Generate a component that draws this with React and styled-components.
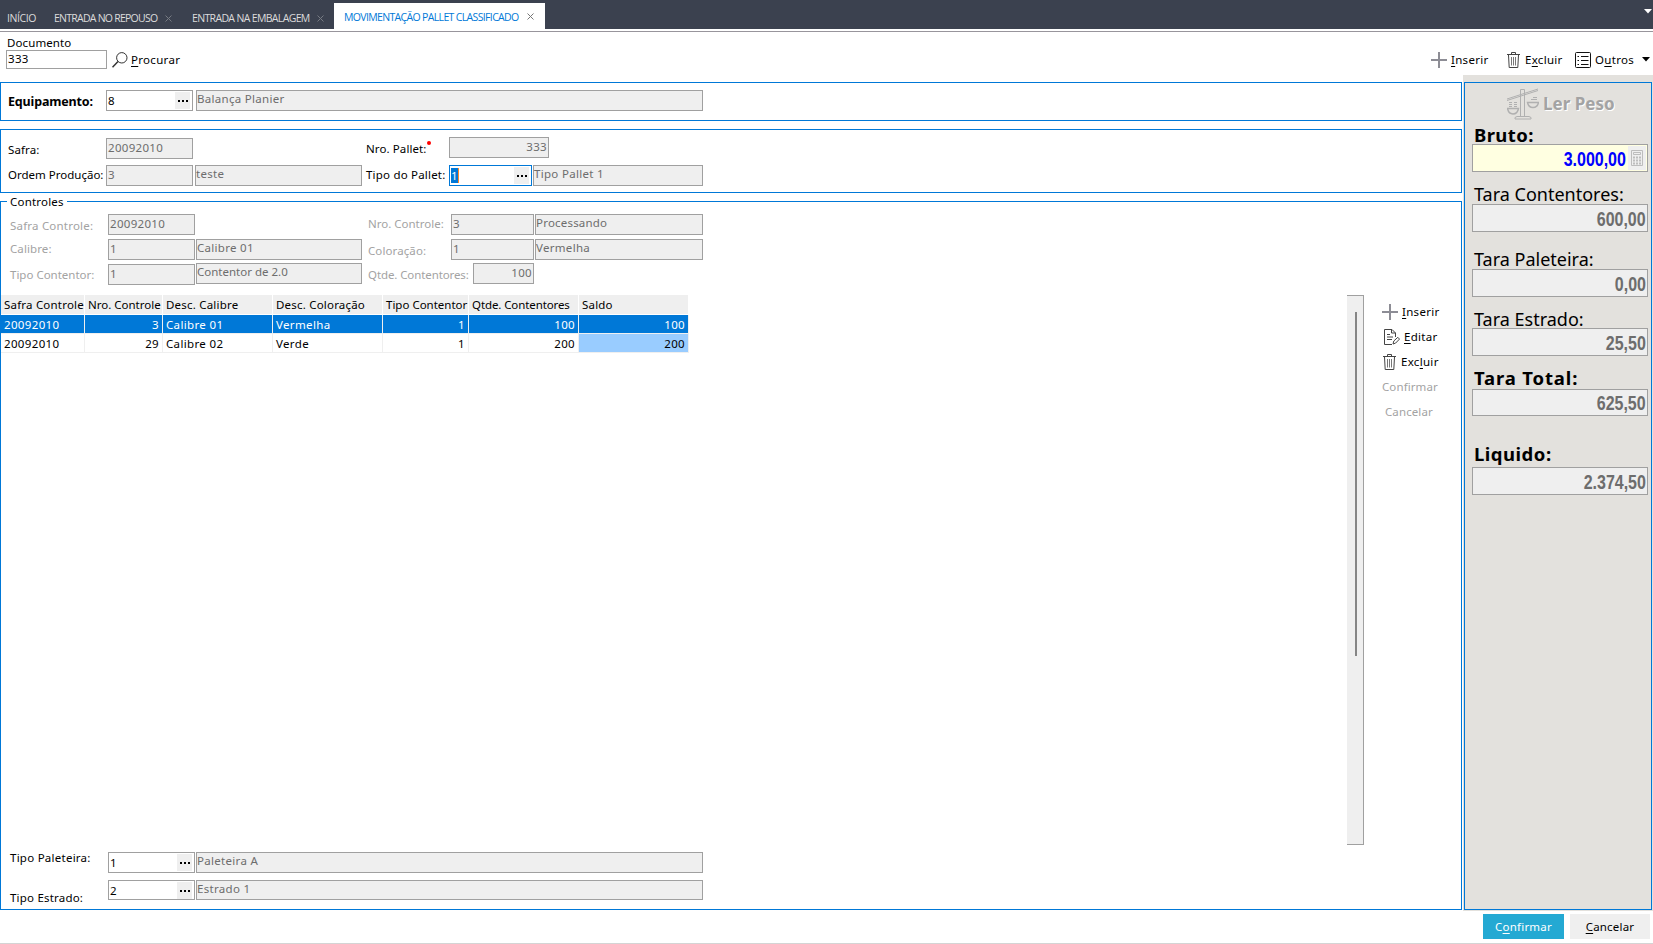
import React from 'react'
import styled, { createGlobalStyle, css } from 'styled-components'

const colors = {
  blue: '#0078d7',
  bar: '#3b414f',
  field: '#efefef',
  fieldBorder: '#a0a0a0',
  fieldText: '#6d6d6d',
  muted: '#a3a3a3',
  side: '#e3e1dd',
}

const GlobalStyle = createGlobalStyle`
  * {
    box-sizing: border-box;
  }

  body {
    margin: 0;
    background: #fff;
    color: #000;
    font-family: 'Noto Sans', 'Open Sans', sans-serif;
    font-size: 11.5px;
    line-height: 16px;
    letter-spacing: 0.1px;
    white-space: nowrap;
    overflow: hidden;
  }

  u {
    text-decoration-thickness: 1px;
    text-underline-offset: 2px;
  }
`

const Page = styled.div`
  display: flex;
  flex-direction: column;
  width: 1653px;
  height: 944px;
  border-bottom: 1px solid #d4d4d4;
`

const TabBar = styled.nav`
  display: flex;
  align-items: flex-end;
  height: 29px;
  background: ${colors.bar};
`

const Tab = styled.div`
  display: flex;
  align-items: center;
  justify-content: space-between;
  width: ${({ $w }) => $w}px;
  height: 26px;
  margin-left: ${({ $left }) => $left || 0}px;
  padding: ${({ $active }) => ($active ? '1px 11px 0 10px' : '4px 10px 0 7px')};
  background: ${({ $active }) => ($active ? '#fff' : 'transparent')};
  color: ${({ $active }) => ($active ? colors.blue : '#dcdcdc')};
  font-family: 'Open Sans', sans-serif;
  font-size: 10.5px;
  letter-spacing: ${({ $track }) => $track || -0.4}px;

  svg {
    flex: none;
    color: ${({ $active }) => ($active ? '#777' : '#777b83')};
  }
`

const TabMenu = styled.div`
  display: flex;
  flex: 1;
  justify-content: flex-end;
  height: 26px;
  padding: 6px 1px 0 0;
  color: #fff;
`

const TabRule = styled.div`
  height: 3px;
  border-bottom: 1px solid #98959c;
`

const Toolbar = styled.header`
  display: flex;
  justify-content: space-between;
  height: 43px;
  padding: 3px 3px 0 6px;
`

const Search = styled.div`
  display: flex;
  align-items: flex-end;
  height: 34px;
`

const SearchField = styled.label`
  display: block;
  width: 101px;
  margin-right: 5px;
  text-indent: 1px;
`

const Caption = styled.span`
  display: block;
  line-height: 14px;
`

const Action = styled.div`
  display: flex;
  align-items: center;
  gap: ${({ $gap }) => $gap || 4}px;
  width: ${({ $w }) => ($w ? `${$w}px` : 'auto')};
  height: ${({ $h }) => $h || 25}px;
  padding-left: ${({ $left }) => $left || 0}px;
  color: ${({ $disabled }) => ($disabled ? colors.muted : '#000')};
  font-size: 11.5px;
  letter-spacing: ${({ $disabled }) => ($disabled ? 0.1 : 0.3)}px;
`

const Actions = styled.div`
  display: flex;
  padding-top: 12px;
`

const Body = styled.main`
  display: flex;
  height: 836px;
`

const Left = styled.div`
  width: 1463px;
  padding-top: 7px;
`

const Panel = styled.section`
  position: relative;
  width: 1462px;
  height: ${({ $h }) => $h}px;
  margin-bottom: 8px;
  border: 1px solid ${colors.blue};
`

const Legend = styled.div`
  position: absolute;
  top: -8px;
  left: 6px;
  padding: 0 3px;
  background: #fff;
  letter-spacing: 0.2px;
`

const Row = styled.div`
  display: flex;
  align-items: flex-start;
  height: ${({ $h }) => $h}px;
  padding-left: ${({ $left }) => $left || 7}px;
`

const Label = styled.div`
  flex: none;
  width: ${({ $w }) => $w}px;
  padding-top: ${({ $top }) => $top || 2}px;
  color: ${({ $muted }) => ($muted ? colors.muted : '#000')};
  letter-spacing: ${({ $track = 0.1 }) => $track}px;
  ${({ $bold }) =>
    $bold &&
    css`
      font-size: 12.5px;
      font-weight: 700;
    `}
`

const Required = styled.span`
  position: absolute;
  width: 4px;
  height: 4px;
  border-radius: 2px;
  background: #f00;
`

const Field = styled.div`
  display: flex;
  flex: none;
  justify-content: ${({ $right }) => ($right ? 'flex-end' : 'flex-start')};
  width: ${({ $w }) => $w}px;
  height: ${({ $h }) => $h || 21}px;
  margin-top: ${({ $top }) => $top || 0}px;
  margin-right: ${({ $gap }) => $gap || 0}px;
  padding: ${({ $pad }) => $pad || '1px 1px'};
  border: 1px solid ${({ $focus }) => ($focus ? colors.blue : colors.fieldBorder)};
  background: ${({ $edit }) => ($edit ? '#fff' : colors.field)};
  color: ${({ $edit }) => ($edit ? '#000' : colors.fieldText)};
  letter-spacing: ${({ $track = 0.3 }) => $track}px;
`

const LookupValue = styled.span`
  flex: 1;
  padding-top: 1px;
`

const Selected = styled.span`
  display: inline-block;
  height: 15px;
  border-right: 1px solid #ff8728;
  background: ${colors.blue};
  color: #fff;
  line-height: 15px;
`

const Dots = styled.span`
  display: flex;
  align-items: center;
  justify-content: center;
  gap: 2px;
  width: 15px;
  height: 17px;
  background: ${colors.field};

  i {
    width: 2px;
    height: 2px;
    background: #000;
  }
`

const Workspace = styled.div`
  display: flex;
  height: 550px;
`

const TableArea = styled.div`
  width: 1346px;
`

const Table = styled.div`
  display: grid;
  grid-template-columns: 84px 78px 110px 110px 86px 110px 110px;
  width: 688px;
`

const Cell = styled.div`
  height: 19px;
  padding: 2px 3px 0;
  border-right: 1px solid ${colors.field};
  border-bottom: 1px solid ${colors.field};
  background: ${({ $selected, $mark }) => (($selected && colors.blue) || ($mark && '#99ccff') || '#fff')};
  color: ${({ $selected }) => ($selected ? '#fff' : '#000')};
  letter-spacing: 0.35px;
  text-align: ${({ $right }) => ($right ? 'right' : 'left')};
`

const HeadCell = styled(Cell)`
  height: 20px;
  padding-right: 0;
  border-color: #fff;
  background: ${colors.field};
  letter-spacing: ${({ $track = 0.1 }) => $track}px;
`

const Scrollbar = styled.div`
  width: 17px;
  height: 550px;
  padding: 16px 0 0 8px;
  border: 1px solid ${colors.fieldBorder};
  border-left: 0;
  background: ${colors.field};
`

const Thumb = styled.div`
  width: 2px;
  height: 344px;
  background: #858585;
`

const RowActions = styled.div`
  padding: 4px 0 0 18px;
`

const Side = styled.aside`
  width: 190px;
  padding: 7px 1px 0;
  background: ${colors.side};
`

const SidePanel = styled.div`
  width: 188px;
  height: 828px;
  padding: 4px 3px 0 7px;
  border: 1px solid ${colors.blue};
`

const ReadWeight = styled.div`
  display: flex;
  align-items: center;
  gap: 4px;
  height: 33px;
  padding-left: 35px;
  color: #a3a3a3;
  font-size: 17px;
  font-weight: 700;
  letter-spacing: 0;
  text-shadow: 1px 1px 0 #fff;
`

const WeightLabel = styled.div`
  height: ${({ $h }) => $h}px;
  padding-top: ${({ $top }) => $top}px;
  padding-left: 2px;
  font-size: ${({ $bold }) => ($bold ? 18.5 : 18)}px;
  font-weight: ${({ $bold }) => ($bold ? 700 : 400)};
  line-height: 24px;
  letter-spacing: ${({ $track }) => $track || 0}px;
`

const WeightValue = styled.div`
  display: flex;
  align-items: center;
  justify-content: flex-end;
  width: 176px;
  height: ${({ $h }) => $h || 28}px;
  padding: 1px 1px 0;
  border: 1px solid ${colors.fieldBorder};
  background: ${({ $live }) => ($live ? '#ffffe1' : colors.field)};
  color: ${({ $live }) => ($live ? '#0000ff' : colors.fieldText)};
`

const Digits = styled.span`
  font-family: 'Liberation Sans', Arial, sans-serif;
  font-size: 19.5px;
  font-weight: 700;
  letter-spacing: 0;
  transform: scaleX(0.82);
  transform-origin: right center;
`

const Calculator = styled.span`
  display: flex;
  align-items: center;
  justify-content: center;
  width: 18px;
  height: 24px;
  margin: -1px 0 0 2px;
  background: ${colors.field};
`

const Footer = styled.footer`
  display: flex;
  justify-content: flex-end;
  gap: 6px;
  padding: 3px 3px 0 0;
`

const Button = styled.button`
  width: ${({ $primary }) => ($primary ? 81 : 80)}px;
  height: 25px;
  padding: 0;
  border: 0;
  background: ${({ $primary }) => ($primary ? '#24a9d3' : colors.field)};
  color: ${({ $primary }) => ($primary ? '#fff' : '#000')};
  font: inherit;
  letter-spacing: 0.2px;
`

const CloseIcon = () => (
  <svg width="7" height="7" viewBox="0 0 7 7" fill="none" stroke="currentColor">
    <path d="M.5.5l6 6M6.5.5l-6 6" />
  </svg>
)

const SearchIcon = () => (
  <svg width="16" height="16" viewBox="0 0 16 16" fill="none" stroke="#333">
    <circle cx="9.8" cy="5.8" r="5.2" />
    <path d="M6 9.5L.5 15.2" strokeWidth="1.5" />
  </svg>
)

const PlusIcon = () => (
  <svg width="16" height="16" viewBox="0 0 16 16" stroke="#8d8d95" strokeWidth="2">
    <path d="M8 0v16M0 8h16" />
  </svg>
)

const TrashIcon = () => (
  <svg width="13" height="16" viewBox="0 0 13 16" fill="none" stroke="#444">
    <path d="M0 2.5h13M4.5 2V.5h4V2M1.5 3l.7 12.5h8.6L11.5 3" />
    <path d="M4.5 5v8.5M6.5 5v8.5M8.5 5v8.5" stroke="#777" />
  </svg>
)

const ListIcon = () => (
  <svg width="16" height="16" viewBox="0 0 16 16" fill="none" stroke="#111">
    <rect x=".5" y=".5" width="15" height="15" rx="1" />
    <path d="M2.5 4.5H4M2.5 8.5H4M2.5 12.5H4M6 4.5h7.5M6 8.5h7.5M6 12.5h7.5" />
  </svg>
)

const EditIcon = () => (
  <svg width="16" height="16" viewBox="0 0 16 16" fill="none" stroke="#444">
    <path d="M8 15.5H.5V.5H8L11.5 4v4M7.5.5V4h4M3 5.5h3M3 8h6M3 10.5h5" />
    <path d="M9 15l.8-3 4-3.7 1.7 1.8-3.9 4z" />
  </svg>
)

const Caret = () => (
  <svg width="8" height="5" viewBox="0 0 8 5" fill="currentColor">
    <path d="M0 0h8L4 4.5z" />
  </svg>
)

const ScaleIcon = () => (
  <svg width="32" height="32" viewBox="0 0 32 32" fill="none" stroke="#b0b0b0">
    <path d="M0 11L31 1M0 12.5L31 2.5" />
    <path d="M13.5 28V1.5h4V28M8 31v-1.5l2-1h12l2 1V31z" />
    <path d="M.5 20.5h11q-1 5.5-5.5 5.5T.5 20.5zM20.5 14.5h11q-1 5-5.5 5t-5.5-5z" strokeWidth="1.4" />
    <path d="M2 14.5h3M7 14.5h3M2 16.5h3M7 16.5h3M2 18.5h3M7 18.5h3M26 9.5h4M24 11.5h6" />
  </svg>
)

const CalculatorIcon = () => (
  <svg width="12" height="16" viewBox="0 0 12 16" fill="none" stroke="#bdbdbd">
    <path d="M.5.5h11v15H.5zM2.5 2.5h7v2h-7z" />
    <path d="M2 7.5h8M2 10.5h8M2 13.5h8" strokeWidth="2" strokeDasharray="2 1" />
  </svg>
)

const Lookup = ({ value, focus, ...props }) => (
  <Field $edit $focus={focus} $pad="1px 2px 1px 1px" {...props}>
    <LookupValue>{focus ? <Selected>{value}</Selected> : value}</LookupValue>
    <Dots>
      <i />
      <i />
      <i />
    </Dots>
  </Field>
)

const Weight = ({ children, ...props }) => (
  <WeightValue {...props}>
    <Digits>{children}</Digits>
    {props.$live && <Calculator><CalculatorIcon /></Calculator>}
  </WeightValue>
)

const headers = [
  { title: 'Safra Controle', track: 0.2 },
  { title: 'Nro. Controle', track: 0 },
  { title: 'Desc. Calibre', track: 0.2 },
  { title: 'Desc. Coloração', track: 0.2 },
  { title: 'Tipo Contentor', track: 0 },
  { title: 'Qtde. Contentores', track: -0.1 },
  { title: 'Saldo', track: 0.2 },
]
const rows = [
  ['20092010', '3', 'Calibre 01', 'Vermelha', '1', '100', '100'],
  ['20092010', '29', 'Calibre 02', 'Verde', '1', '200', '200'],
]
const numeric = [1, 4, 5, 6]

const App = () => (
  <Page>
    <GlobalStyle />
    <TabBar>
      <Tab $w={47}>INÍCIO</Tab>
      <Tab $w={135} $track={-0.75}>ENTRADA NO REPOUSO <CloseIcon /></Tab>
      <Tab $w={149} $left={3} $track={-0.65}>ENTRADA NA EMBALAGEM <CloseIcon /></Tab>
      <Tab $w={211} $active $track={-0.65}>MOVIMENTAÇÃO PALLET CLASSIFICADO <CloseIcon /></Tab>
      <TabMenu><Caret /></TabMenu>
    </TabBar>
    <TabRule />
    <Toolbar>
      <Search>
        <SearchField>
          <Caption>Documento</Caption>
          <Field $w={101} $h={19} $edit $pad="0">333</Field>
        </SearchField>
        <Action $h={19} $gap={3}><SearchIcon /><span><u>P</u>rocurar</span></Action>
      </Search>
      <Actions>
        <Action $w={76} $gap={4}><PlusIcon /><span><u>I</u>nserir</span></Action>
        <Action $w={68} $gap={5}><TrashIcon /><span>E<u>x</u>cluir</span></Action>
        <Action $w={67}><ListIcon /><span>O<u>u</u>tros</span></Action>
        <Action><Caret /></Action>
      </Actions>
    </Toolbar>
    <Body>
      <Left>
        <Panel $h={39}>
          <Row $h={37}>
            <Label $w={98} $top={11} $track={-0.15} $bold>Equipamento:</Label>
            <Lookup $w={87} $top={7} $gap={3} value="8" />
            <Field $w={507} $top={7} $pad="0">Balança Planier</Field>
          </Row>
        </Panel>
        <Panel $h={64}>
          <Row $h={35}>
            <Label $w={98} $top={12}>Safra:</Label>
            <Field $w={87} $top={8} $gap={173}>20092010</Field>
            <Label $w={83} $top={11}>Nro. Pallet:<Required /></Label>
            <Field $w={100} $top={7} $right>333</Field>
          </Row>
          <Row $h={27}>
            <Label $w={98} $track={0}>Ordem Produção:</Label>
            <Field $w={87} $gap={2}>3</Field>
            <Field $w={167} $gap={4} $pad="0">teste</Field>
            <Label $w={83} $track={0.2}>Tipo do Pallet:</Label>
            <Lookup $w={83} $gap={1} focus value="1" />
            <Field $w={170} $pad="0">Tipo Pallet 1</Field>
          </Row>
        </Panel>
        <Panel $h={709}>
          <Legend>Controles</Legend>
          <Row $h={37} $left={9}>
            <Label $w={98} $top={16} $track={0.2} $muted>Safra Controle:</Label>
            <Field $w={87} $top={12} $gap={173}>20092010</Field>
            <Label $w={83} $top={14} $track={0} $muted>Nro. Controle:</Label>
            <Field $w={83} $top={12} $gap={1}>3</Field>
            <Field $w={168} $top={12} $pad="0" $track={0.2}>Processando</Field>
          </Row>
          <Row $h={24} $left={9}>
            <Label $w={98} $muted>Calibre:</Label>
            <Field $w={87} $gap={1}>1</Field>
            <Field $w={166} $gap={6} $pad="0">Calibre 01</Field>
            <Label $w={83} $top={4} $muted>Coloração:</Label>
            <Field $w={83} $gap={1}>1</Field>
            <Field $w={168} $pad="0">Vermelha</Field>
          </Row>
          <Row $h={32} $left={9}>
            <Label $w={98} $top={4} $track={0} $muted>Tipo Contentor:</Label>
            <Field $w={87} $top={1} $gap={1}>1</Field>
            <Field $w={166} $gap={6} $pad="0" $track={0}>Contentor de 2.0</Field>
            <Label $w={105} $top={4} $track={-0.1} $muted>Qtde. Contentores:</Label>
            <Field $w={61} $right>100</Field>
          </Row>
          <Workspace>
            <TableArea>
              <Table>
                {headers.map(({ title, track }) => <HeadCell key={title} $track={track}>{title}</HeadCell>)}
                {rows.map((row, y) =>
                  row.map((value, x) => (
                    <Cell key={`${y}-${x}`} $selected={y === 0} $mark={x === 6} $right={numeric.includes(x)}>
                      {value}
                    </Cell>
                  ))
                )}
              </Table>
            </TableArea>
            <Scrollbar><Thumb /></Scrollbar>
            <RowActions>
              <Action><PlusIcon /><span><u>I</u>nserir</span></Action>
              <Action $left={2}><EditIcon /><span><u>E</u>ditar</span></Action>
              <Action $left={1} $gap={5}><TrashIcon /><span>Exc<u>l</u>uir</span></Action>
              <Action $disabled>Confirmar</Action>
              <Action $disabled $left={3}>Cancelar</Action>
            </RowActions>
          </Workspace>
          <Row $h={35} $left={9}>
            <Label $w={98} $top={5} $track={0.25}>Tipo Paleteira:</Label>
            <Lookup $w={87} $top={7} $gap={1} value="1" />
            <Field $w={507} $top={7} $pad="0">Paleteira A</Field>
          </Row>
          <Row $h={28} $left={9}>
            <Label $w={98} $top={10} $track={0.2}>Tipo Estrado:</Label>
            <Lookup $w={87} $h={20} $gap={1} value="2" />
            <Field $w={507} $h={20} $pad="0">Estrado 1</Field>
          </Row>
        </Panel>
      </Left>
      <Side>
        <SidePanel>
          <ReadWeight><ScaleIcon />Ler Peso</ReadWeight>
          <WeightLabel $h={24} $top={3} $bold $track={0.4}>Bruto:</WeightLabel>
          <Weight $live>3.000,00</Weight>
          <WeightLabel $h={32} $top={10}>Tara Contentores:</WeightLabel>
          <Weight>600,00</Weight>
          <WeightLabel $h={37} $top={15}>Tara Paleteira:</WeightLabel>
          <Weight>0,00</Weight>
          <WeightLabel $h={31} $top={10}>Tara Estrado:</WeightLabel>
          <Weight>25,50</Weight>
          <WeightLabel $h={33} $top={10} $bold $track={0.85}>Tara Total:</WeightLabel>
          <Weight $h={27}>625,50</Weight>
          <WeightLabel $h={51} $top={26} $bold $track={0.5}>Liquido:</WeightLabel>
          <Weight>2.374,50</Weight>
        </SidePanel>
      </Side>
    </Body>
    <Footer>
      <Button $primary>C<u>o</u>nfirmar</Button>
      <Button><u>C</u>ancelar</Button>
    </Footer>
  </Page>
)

export default App
